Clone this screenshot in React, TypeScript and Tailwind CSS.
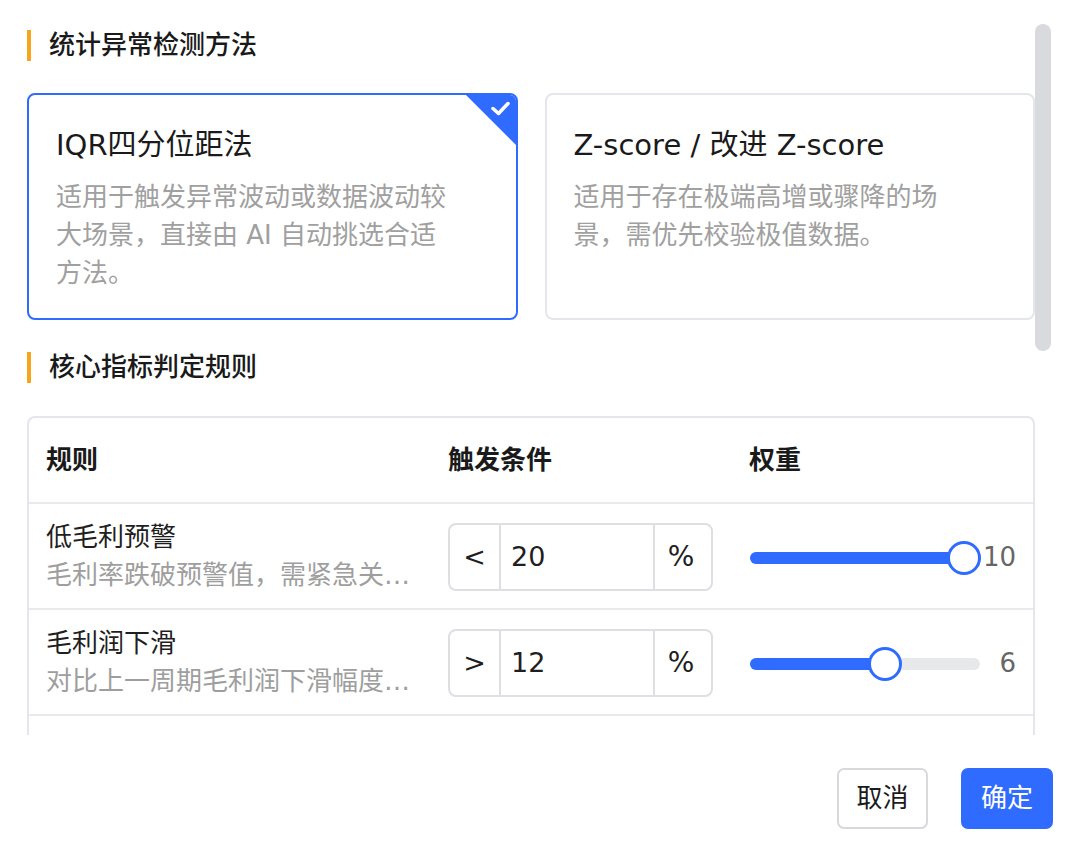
import React from 'react';

const font = "font-['DejaVu_Sans','Noto_Sans_CJK_SC',sans-serif]";

function SectionTitle({ text }: { text: string }) {
  return (
    <div className="flex items-center gap-[18px] h-[31px]">
      <div className="w-[4px] h-[31px] bg-[#f7a51c]" />
      <h2 className="text-[26px] leading-[31px] font-medium text-[#1a1a1a]">{text}</h2>
    </div>
  );
}

function MethodCard({ title, desc, active }: { title: string; desc: string; active?: boolean }) {
  return (
    <div
      className={`relative flex-1 h-[227px] rounded-[8px] border-2 overflow-hidden bg-white px-[27px] pt-[32px] ${
        active ? 'border-[#2f6bff]' : 'border-[#e4e6eb]'
      }`}
    >
      {active && (
        <svg className="absolute top-0 right-0" width="50" height="50" viewBox="0 0 50 50">
          <polygon points="0,0 50,0 50,50" fill="#2f6bff" />
          <path d="M27 13.5 L32.5 18.5 L42 8.5" stroke="#fff" strokeWidth="3.5" fill="none" strokeLinecap="round" strokeLinejoin="round" />
        </svg>
      )}
      <h3 className="text-[29px] leading-[36px] text-[#1a1a1a]">{title}</h3>
      <p className="mt-[15px] max-w-[400px] text-[26px] leading-[38px] text-[#a0a0a0]">{desc}</p>
    </div>
  );
}

function Slider({ value }: { value: number }) {
  const pos = `calc(16px + (100% - 32px) * ${value / 10})`;
  return (
    <div className="flex items-center">
      <div className="relative flex-1 h-[12px] rounded-full bg-[#e6e8ea]">
        <div className="absolute left-0 top-0 h-full rounded-full bg-[#2f6bff]" style={{ width: pos }} />
        <div
          className="absolute top-1/2 w-[34px] h-[34px] -translate-x-1/2 -translate-y-1/2 rounded-full border-[3px] border-[#2f6bff] bg-white"
          style={{ left: pos }}
        />
      </div>
      <span className="w-[36px] text-right text-[26px] text-[#666]">{value}</span>
    </div>
  );
}

const rules = [
  { name: '低毛利预警', desc: '毛利率跌破预警值，需紧急关注毛利结构变化', op: '<', val: '20', weight: 10 },
  { name: '毛利润下滑', desc: '对比上一周期毛利润下滑幅度超过阈值', op: '>', val: '12', weight: 6 },
];

export default function App() {
  return (
    <div className={`${font} w-[1074px] h-[846px] bg-white overflow-hidden`}>
      <div className="flex h-[735px] overflow-hidden">
        <div className="w-[1035px] pl-[27px] pt-[30px]">
          <SectionTitle text="统计异常检测方法" />
          <div className="mt-[32px] flex gap-[27px]">
            <MethodCard
              active
              title="IQR四分位距法"
              desc="适用于触发异常波动或数据波动较大场景，直接由 AI 自动挑选合适方法。"
            />
            <MethodCard title="Z-score / 改进 Z-score" desc="适用于存在极端高增或骤降的场景，需优先校验极值数据。" />
          </div>

          <div className="mt-[32px]">
            <SectionTitle text="核心指标判定规则" />
          </div>

          <div className="mt-[33px] rounded-t-[8px] border-2 border-b-0 border-[#e4e6eb]">
            <div className="grid grid-cols-[402px_301px_1fr] h-[86px] items-center border-b-2 border-[#e8e9ec] text-[26px] font-bold text-[#1a1a1a]">
              <div className="px-[17px]">规则</div>
              <div className="px-[17px]">触发条件</div>
              <div className="px-[17px]">权重</div>
            </div>
            {rules.map((r) => (
              <div
                key={r.name}
                className="grid grid-cols-[402px_301px_1fr] h-[106px] items-center border-b-2 border-[#e8e9ec]"
              >
                <div className="px-[17px] min-w-0">
                  <div className="text-[26px] leading-[38px] text-[#1f1f1f]">{r.name}</div>
                  <div className="text-[26px] leading-[38px] text-[#9e9e9e] truncate">{r.desc}</div>
                </div>
                <div className="pl-[17px] pr-[19px] pt-[2px]">
                  <div className="flex h-[68px] rounded-[8px] border-2 border-[#dedfe3] text-[27px] text-[#1f1f1f]">
                    <div className="w-[51px] flex items-center justify-center border-r-2 border-[#dedfe3]">{r.op}</div>
                    <div className="flex-1 flex items-center pl-[10px] border-r-2 border-[#dedfe3]">{r.val}</div>
                    <div className="w-[56px] flex items-center justify-center pr-[4px] text-[28px]">%</div>
                  </div>
                </div>
                <div className="pl-[18px] pr-[17px] pt-[3px]">
                  <Slider value={r.weight} />
                </div>
              </div>
            ))}
            <div className="h-[40px]" />
          </div>
        </div>
        <div className="w-[17px] pt-[24px]">
          <div className="w-[16px] h-[327px] rounded-full bg-[#d9dadd]" />
        </div>
      </div>

      <div className="flex justify-end gap-[33px] pt-[33px] pr-[21px]">
        <button className="w-[91px] h-[61px] rounded-[7px] border-2 border-[#d9d9dd] bg-white text-[26px] text-[#1a1a1a]">
          取消
        </button>
        <button className="w-[92px] h-[61px] rounded-[7px] bg-[#2f6bff] text-[26px] text-white">确定</button>
      </div>
    </div>
  );
}
